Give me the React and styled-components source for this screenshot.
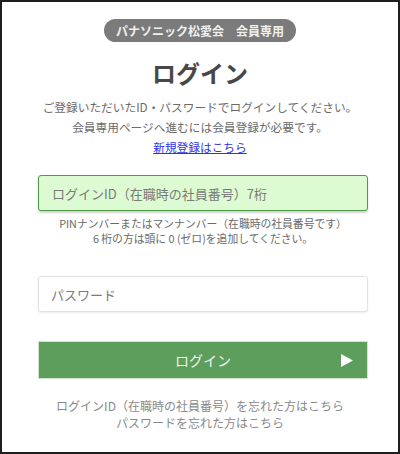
import React from "react";
import styled, { createGlobalStyle } from "styled-components";

const Global = createGlobalStyle`
  html, body { margin: 0; padding: 0; background: #fff; }
  body { font-family: "Noto Sans CJK JP", "Noto Sans", sans-serif; }
  * { box-sizing: border-box; }
`;

const Frame = styled.div`
  width: 400px;
  height: 454px;
  border: 2px solid #1e1e1e;
  display: flex;
  flex-direction: column;
  align-items: center;
  background: #fff;
`;

const Pill = styled.div`
  margin-top: 17px;
  height: 23px;
  line-height: 23px;
  padding: 0 12px;
  border-radius: 12px;
  background: #7b7b7b;
  color: #f0f0f0;
  font-size: 12px;
  font-weight: 700;
  white-space: pre;
`;

const Title = styled.h1`
  margin: 16px 0 0;
  font-size: 24px;
  line-height: 30px;
  font-weight: 700;
  color: #474747;
`;

const Intro = styled.p`
  margin: 9px 0 0;
  font-size: 11.7px;
  line-height: 20px;
  color: #6a6a6a;
  text-align: center;
`;

const Link = styled.a`
  color: #2b35e8;
  text-decoration: underline;
`;

const Form = styled.div`
  align-self: stretch;
  margin: 0 30px 0 36px;
  display: flex;
  flex-direction: column;
  align-items: stretch;
`;

const Field = styled.div`
  height: 36px;
  border-radius: 3px;
  display: flex;
  align-items: center;
  padding-left: ${(p) => (p.$active ? "13px" : "12px")};
  font-size: 13px;
  color: #7a7a7a;
  margin-top: ${(p) => p.$mt}px;
  background: ${(p) => (p.$active ? "#dcfbd2" : "#fff")};
  border: ${(p) => (p.$active ? "1.5px solid #4f9a45" : "1px solid #e2e2e2")};
  box-shadow: ${(p) =>
    p.$active ? "0 2px 2px rgba(0,0,0,0.18)" : "0 1px 2px rgba(0,0,0,0.08)"};
`;

const Help = styled.p`
  margin: 5px 0 0;
  font-size: 10.8px;
  line-height: 15px;
  color: #6a6a6a;
  text-align: center;
`;

const Button = styled.div`
  margin-top: 29px;
  height: 38px;
  background: #5d9e5d;
  border: 1px solid #cfe3cf;
  position: relative;
  display: flex;
  align-items: center;
  justify-content: center;
  color: #eef3ee;
  font-size: 14px;
`;

const Arrow = styled.svg`
  position: absolute;
  right: 14px;
  top: 12px;
`;

const Footer = styled.p`
  margin: 18px 0 0;
  font-size: 12px;
  line-height: 17px;
  color: #8a8a8a;
  text-align: center;
`;

export default function App() {
  return (
    <>
      <Global />
      <Frame>
        <Pill>{"パナソニック松愛会　会員専用"}</Pill>
        <Title>ログイン</Title>
        <Intro>
          ご登録いただいたID・パスワードでログインしてください。
          <br />
          会員専用ページへ進むには会員登録が必要です。
          <br />
          <Link href="#">新規登録はこちら</Link>
        </Intro>
        <Form>
          <Field $active $mt={18}>ログインID（在職時の社員番号）7桁</Field>
          <Help>
            PINナンバーまたはマンナンバー（在職時の社員番号です）
            <br />
            6 桁の方は頭に 0 (ゼロ)を追加してください。
          </Help>
          <Field $mt={30}>パスワード</Field>
          <Button>
            ログイン
            <Arrow width="12" height="13" viewBox="0 0 12 13">
              <polygon points="0,0 12,6.5 0,13" fill="#fff" />
            </Arrow>
          </Button>
        </Form>
        <Footer>
          ログインID（在職時の社員番号）を忘れた方はこちら
          <br />
          パスワードを忘れた方はこちら
        </Footer>
      </Frame>
    </>
  );
}
